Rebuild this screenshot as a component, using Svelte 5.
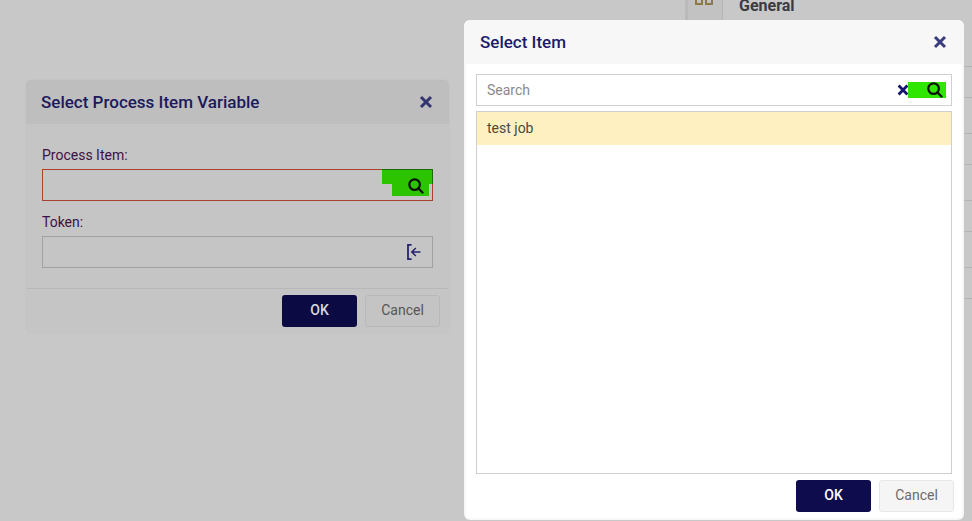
<script lang="ts">
	const rowLines = [66, 97, 133, 164, 200, 231, 267, 298];
	let search = $state('');
	let processItem = $state('');
	let token = $state('');
</script>

{#snippet closeIcon()}
	<svg class="close-icon" viewBox="0 0 14 14" width="14" height="14" aria-hidden="true">
		<path d="M2 2 12 12M12 2 2 12" />
	</svg>
{/snippet}

{#snippet searchIcon()}
	<svg class="search-icon" viewBox="0 0 16 16" width="16" height="16" aria-hidden="true">
		<circle cx="6.6" cy="6.6" r="5.3" />
		<path d="M10.4 10.4 15.2 15.2" />
	</svg>
{/snippet}

<div class="page">
	<div class="backdrop-panel">
		<div class="panel-rail">
			<span class="rail-icon"></span>
			<span class="rail-icon"></span>
		</div>
		<div class="panel-title">General</div>
		{#each rowLines as y}
			<div class="row-line" style="top: {y}px"></div>
		{/each}
	</div>

	<section class="dialog dialog-process">
		<header class="dialog-header dim">
			<h2>Select Process Item Variable</h2>
			<button class="close">{@render closeIcon()}</button>
		</header>
		<div class="process-body">
			<label class="field-label" for="process-item">Process Item:</label>
			<div class="field invalid">
				<input id="process-item" bind:value={processItem} />
				<span class="green-top"></span>
				<span class="green-bottom"></span>
				<span class="field-icon">{@render searchIcon()}</span>
			</div>
			<label class="field-label token-label" for="token">Token:</label>
			<div class="field">
				<input id="token" bind:value={token} />
				<span class="field-icon token-icon">
					<svg viewBox="0 0 14 16" width="14" height="16" aria-hidden="true">
						<path class="bracket" d="M4.6 .8H1V15.2H4.6" />
						<path d="M13.5 8H5M8.8 4 4.8 8 8.8 12" />
					</svg>
				</span>
			</div>
		</div>
		<footer class="dialog-footer dim-footer">
			<button class="btn primary dim-primary">OK</button>
			<button class="btn secondary dim-secondary">Cancel</button>
		</footer>
	</section>

	<section class="dialog dialog-item">
		<header class="dialog-header">
			<h2>Select Item</h2>
			<button class="close">{@render closeIcon()}</button>
		</header>
		<div class="item-body">
			<div class="search-box">
				<input placeholder="Search" bind:value={search} />
				<button class="clear">
					<svg viewBox="0 0 12 12" width="12" height="12" aria-hidden="true">
						<path d="M1.6 1.6 10.4 10.4M10.4 1.6 1.6 10.4" />
					</svg>
				</button>
				<span class="search-green">{@render searchIcon()}</span>
			</div>
			<ul class="item-list">
				<li class="selected">test job</li>
			</ul>
		</div>
		<footer class="dialog-footer item-footer">
			<button class="btn primary">OK</button>
			<button class="btn secondary">Cancel</button>
		</footer>
	</section>
</div>

<style>
	:global(body) {
		margin: 0;
		background: #c8c8c8;
		font-family: Roboto, "Liberation Sans", sans-serif;
	}

	.page {
		position: relative;
		width: 972px;
		height: 521px;
		overflow: hidden;
		background: #c8c8c8;
	}

	.backdrop-panel {
		position: absolute;
		left: 685px;
		top: 0;
		right: 0;
		height: 330px;
	}

	.panel-rail {
		position: absolute;
		left: 0;
		top: 0;
		width: 38px;
		height: 20px;
		background: #c2c2c2;
		border-right: 1px solid #b6b6b6;
		border-left: 3px solid #bababa;
		box-sizing: border-box;
		display: flex;
		justify-content: center;
		gap: 2px;
		padding-right: 2px;
	}

	.rail-icon {
		width: 4px;
		height: 3px;
		border: 2px solid #8c7a48;
		border-top: 0;
	}

	.panel-title {
		position: absolute;
		left: 54px;
		top: -4px;
		font-size: 16px;
		font-weight: 700;
		line-height: 19px;
		color: #3c3c40;
	}

	.row-line {
		position: absolute;
		left: 38px;
		right: 0;
		height: 1px;
		background: #b4b4b4;
	}

	.dialog {
		position: absolute;
		display: flex;
		flex-direction: column;
		box-sizing: border-box;
	}

	.dialog-process {
		left: 26px;
		top: 80px;
		width: 423px;
		height: 253px;
		background: #c5c5c5;
		border-radius: 5px;
		box-shadow: 0 0 0 1px rgba(0, 0, 0, 0.012);
	}

	.dialog-item {
		left: 464px;
		top: 20px;
		width: 500px;
		height: 500px;
		background: #f7f7f7;
		border-radius: 6px;
		overflow: hidden;
	}

	.dialog-header {
		flex: none;
		height: 44px;
		box-sizing: border-box;
		display: flex;
		align-items: center;
		justify-content: space-between;
		padding: 0 17px 0 16px;
		background: #f7f7f7;
	}

	.dialog-header.dim {
		background: #bebebe;
		border-radius: 5px 5px 0 0;
		padding: 0 16px 0 15px;
	}

	h2 {
		margin: 0;
		font-size: 17px;
		font-weight: 500;
		line-height: 20px;
		color: #1c1a6b;
	}

	.dim h2 {
		color: #1a1a5c;
	}

	.close,
	.clear {
		display: flex;
		padding: 0;
		border: 0;
		background: none;
	}

	.close-icon path,
	.clear path {
		fill: none;
		stroke: #3a3d80;
		stroke-width: 3;
	}

	.dim .close-icon path {
		stroke: #34376f;
	}

	.clear path {
		stroke: #15156e;
		stroke-width: 2.8;
	}

	.process-body {
		flex: 1;
		padding: 23px 16px 0;
	}

	.field-label {
		display: block;
		font-size: 14px;
		line-height: 17px;
		color: #3d1240;
		margin-bottom: 5px;
	}

	.token-label {
		margin-top: 13px;
	}

	.field {
		position: relative;
		height: 32px;
		box-sizing: border-box;
		border: 1px solid #a2a2a2;
	}

	.field.invalid {
		border-color: #a8412f;
	}

	.field input {
		width: 100%;
		height: 100%;
		box-sizing: border-box;
		border: 0;
		background: transparent;
		outline: none;
	}

	.green-top {
		position: absolute;
		top: -1px;
		right: -1px;
		width: 51px;
		height: 15px;
		background: #2cc400;
		border-top: 1px solid #1f6a10;
		border-right: 1px solid #1f6a10;
		box-sizing: border-box;
	}

	.green-bottom {
		position: absolute;
		top: 14px;
		right: 3px;
		width: 37px;
		height: 12px;
		background: #2cc400;
	}

	.field-icon {
		position: absolute;
		top: 8px;
		right: 8px;
		display: flex;
	}

	.search-icon circle,
	.search-icon path {
		fill: none;
		stroke: #0d1208;
		stroke-width: 2.2;
	}

	.token-icon {
		right: 11px;
		top: 7px;
	}

	.token-icon path {
		fill: none;
		stroke: #25256b;
		stroke-width: 1.5;
	}

	.token-icon .bracket {
		stroke-width: 1.8;
	}

	.dialog-footer {
		flex: none;
		display: flex;
		justify-content: flex-end;
		gap: 8px;
	}

	.dim-footer {
		height: 45px;
		box-sizing: border-box;
		border-top: 1px solid #b8b8b8;
		padding: 6px 8px 0 0;
		margin: 0 1px;
	}

	.btn {
		width: 75px;
		height: 32px;
		box-sizing: border-box;
		border-radius: 3px;
		font-family: inherit;
		font-size: 14px;
		padding: 0 0 2px;
	}

	.primary {
		border: 0;
		background: #0f0c4e;
		color: #fff;
		font-weight: 500;
	}

	.secondary {
		border: 1px solid #e6e6e6;
		background: #f5f5f5;
		color: #6c6c6c;
	}

	.dim-primary {
		background: #0b0a42;
		color: #d8d8d8;
	}

	.dim-secondary {
		background: #c4c4c4;
		border-color: #b8b8b8;
		color: #565656;
	}

	.item-body {
		flex: 1;
		min-height: 0;
		display: flex;
		flex-direction: column;
		gap: 5px;
		margin: 0 2px;
		padding: 10px 10px 0;
		background: #fff;
	}

	.search-box {
		flex: none;
		position: relative;
		height: 32px;
		box-sizing: border-box;
		border: 1px solid #d0d0d0;
		display: flex;
		align-items: center;
	}

	.search-box input {
		flex: 1;
		min-width: 0;
		height: 100%;
		box-sizing: border-box;
		border: 0;
		outline: none;
		padding: 0 10px;
		font-family: inherit;
		font-size: 14px;
		background: transparent;
	}

	.search-box input::placeholder {
		color: #8a8a8a;
	}

	.clear {
		margin-right: 42px;
	}

	.search-green {
		position: absolute;
		top: 7px;
		right: 5px;
		width: 38px;
		height: 16px;
		background: #2fe600;
		display: flex;
		justify-content: flex-end;
		padding-right: 3px;
		box-sizing: border-box;
	}

	.item-list {
		flex: 1;
		min-height: 0;
		list-style: none;
		margin: 0;
		padding: 0;
		border: 1px solid #cfcfcf;
	}

	.selected {
		height: 33px;
		line-height: 33px;
		padding: 0 10px;
		background: #fef0c0;
		font-size: 14px;
		color: #4a4a44;
	}

	.item-footer {
		height: 44px;
		box-sizing: border-box;
		margin: 0 2px 2px;
		padding: 6px 8px 0 0;
		background: #fff;
	}
</style>
